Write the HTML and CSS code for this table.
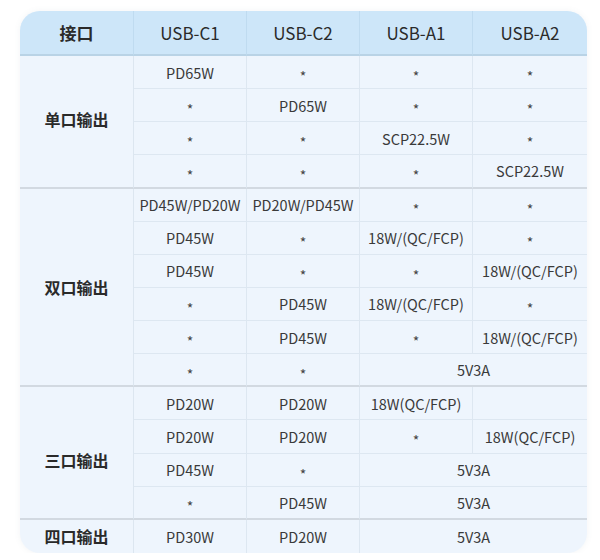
FILE: index.html
```html
<!DOCTYPE html>
<html lang="zh-CN">
<head>
<meta charset="utf-8">
<link rel="stylesheet" href="styles.css">
</head>
<body>
<div class="card">
  <div class="grid">
    <div class="hd first">接口</div>
    <div class="hd">USB-C1</div>
    <div class="hd">USB-C2</div>
    <div class="hd">USB-A1</div>
    <div class="hd last">USB-A2</div>

    <div class="lbl end r4 up">单口输出</div>
    <div class="c">PD65W</div><div class="c"><span class="na">*</span></div><div class="c"><span class="na">*</span></div><div class="c last"><span class="na">*</span></div>
    <div class="c"><span class="na">*</span></div><div class="c">PD65W</div><div class="c"><span class="na">*</span></div><div class="c last"><span class="na">*</span></div>
    <div class="c"><span class="na">*</span></div><div class="c"><span class="na">*</span></div><div class="c">SCP22.5W</div><div class="c last"><span class="na">*</span></div>
    <div class="c end"><span class="na">*</span></div><div class="c end"><span class="na">*</span></div><div class="c end"><span class="na">*</span></div><div class="c end last">SCP22.5W</div>

    <div class="lbl end r6">双口输出</div>
    <div class="c">PD45W/PD20W</div><div class="c">PD20W/PD45W</div><div class="c"><span class="na">*</span></div><div class="c last"><span class="na">*</span></div>
    <div class="c">PD45W</div><div class="c"><span class="na">*</span></div><div class="c">18W/(QC/FCP)</div><div class="c last"><span class="na">*</span></div>
    <div class="c">PD45W</div><div class="c"><span class="na">*</span></div><div class="c"><span class="na">*</span></div><div class="c last">18W/(QC/FCP)</div>
    <div class="c"><span class="na">*</span></div><div class="c">PD45W</div><div class="c">18W/(QC/FCP)</div><div class="c last"><span class="na">*</span></div>
    <div class="c"><span class="na">*</span></div><div class="c">PD45W</div><div class="c"><span class="na">*</span></div><div class="c last">18W/(QC/FCP)</div>
    <div class="c end"><span class="na">*</span></div><div class="c end"><span class="na">*</span></div><div class="c end last span2">5V3A</div>

    <div class="lbl end r4 down">三口输出</div>
    <div class="c">PD20W</div><div class="c">PD20W</div><div class="c">18W(QC/FCP)</div><div class="c last"></div>
    <div class="c">PD20W</div><div class="c">PD20W</div><div class="c"><span class="na">*</span></div><div class="c last">18W(QC/FCP)</div>
    <div class="c">PD45W</div><div class="c"><span class="na">*</span></div><div class="c last span2">5V3A</div>
    <div class="c end"><span class="na">*</span></div><div class="c end">PD45W</div><div class="c end last span2">5V3A</div>

    <div class="lbl bottom">四口输出</div>
    <div class="c bottom">PD30W</div><div class="c bottom">PD20W</div><div class="c bottom last span2">5V3A</div>
  </div>
</div>
</body>
</html>
```

FILE: styles.css
```css
html, body {
  margin: 0;
  padding: 0;
  background: #ffffff;
}
body {
  font-family: "Noto Sans CJK SC", "Noto Sans", sans-serif;
  color: #333333;
}
.card {
  margin: 11px 0 0 20px;
  width: 567px;
  border-radius: 20px;
  overflow: hidden;
  background: #eef5fd;
  box-shadow: 0 0 6px rgba(90, 110, 130, 0.08);
}
.grid {
  display: grid;
  grid-template-columns: 114px 113px 113px 113px 114px;
  grid-template-rows: 45px repeat(15, 33.13px);
}
.grid > div {
  box-sizing: border-box;
  display: flex;
  align-items: center;
  justify-content: center;
  white-space: nowrap;
}
.hd {
  background: #cde6f9;
  font-size: 17px;
  color: #2a2a2a;
  font-weight: 400;
  border-right: 1px solid #bfdbf0;
  border-bottom: 2px solid #b9d3e6;
}
.hd.first { font-weight: 700; }
.hd.last { border-right: none; }
.lbl {
  font-size: 16px;
  font-weight: 700;
  color: #2a2a2a;
  border-right: 1px solid #dce6f0;
}
.lbl.up { padding-bottom: 4px; }
.lbl.down { padding-top: 14px; }
.r4 { grid-row: span 4; }
.r6 { grid-row: span 6; }
.c {
  font-size: 14.5px;
  color: #3a3a3a;
  border-right: 1px solid #dde7f1;
  border-bottom: 1px solid #dde7f1;
}
.c.last { border-right: none; }
.span2 { grid-column: span 2; }
.end { border-bottom: 2px solid #d2d9e1 !important; }
.bottom { border-bottom: none !important; }
.na {
  font-size: 14px;
  color: #444444;
  display: inline-block;
  transform: translateY(4px);
}
```
